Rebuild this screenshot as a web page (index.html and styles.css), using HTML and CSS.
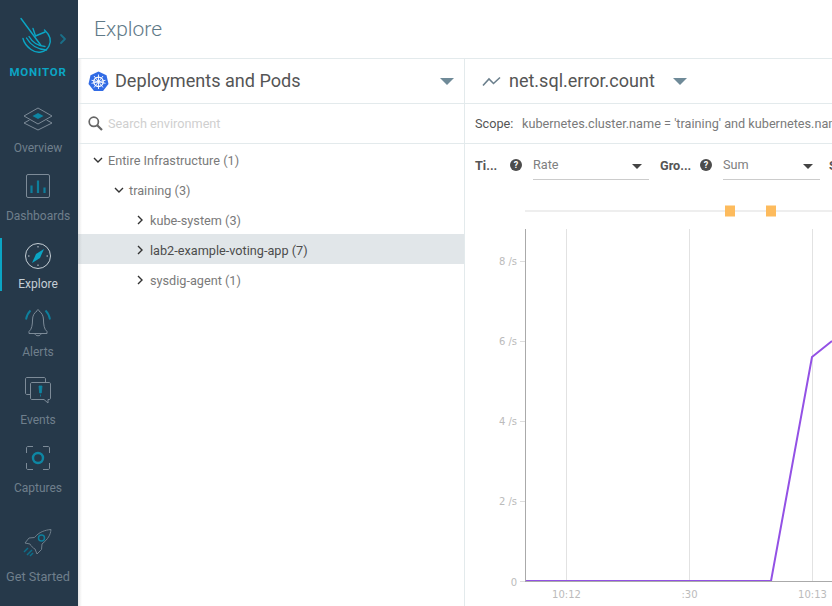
FILE: index.html
```html
<!DOCTYPE html>
<html lang="en">
<head>
    <meta charset="UTF-8">
    <meta name="viewport" content="width=device-width, initial-scale=1.0">
    <title>Explore</title>
    <link rel="stylesheet" href="styles.css">
</head>
<body>
    <nav class="sidebar">
        <div class="brand">
            <svg class="brand-logo" width="78" height="62" viewBox="0 0 78 62" fill="none" stroke="#0ba5c4" stroke-width="1.400" stroke-linecap="round" stroke-linejoin="round">
                <path d="M21 18.500 L41 45.500"/>
                <path d="M33 28.500 L35.500 36 L45 32"/>
                <path d="M44.500 30 C50 35 51.500 41 49 46 C45.500 53 37 54 31 49.500 C27 46.500 24 43 23 38.500"/>
                <path d="M26.500 38 C30 44 36 49.500 46.500 50"/>
                <path d="M29 36.500 C32 41.500 36.500 46 45 46.500"/>
                <path d="M61 35 L65 39 L61 43" stroke="#1a6f88" stroke-width="1.800"/>
            </svg>
            <div class="brand-name">MONITOR</div>
        </div>

        <a class="nav-item">
            <svg class="nav-icon" width="32" height="26" viewBox="0 0 32 26" fill="none" stroke="#7d8b98" stroke-width="1">
                <path d="M2 18 L16 25 L30 18 L24.500 15"/>
                <path d="M7.500 15 L2 18"/>
                <path d="M2 11 L16 3 L30 11 L16 19 Z" fill="#26394a"/>
                <path d="M10.500 11 L16 8 L21.500 11 L16 14 Z" fill="#0e86a3" stroke="none"/>
            </svg>
            <span>Overview</span>
        </a>
        <a class="nav-item">
            <svg class="nav-icon" width="26" height="26" viewBox="0 0 26 26" fill="none" stroke="#7d8b98" stroke-width="1">
                <rect x="1.500" y="1.500" width="23" height="23" rx="1.500"/>
                <path d="M6.500 20 V12.500 M13 20 V7.500 M19.500 20 V14.500" stroke="#0e7f9c" stroke-width="2.200"/>
            </svg>
            <span>Dashboards</span>
        </a>
        <a class="nav-item active">
            <svg class="nav-icon" width="28" height="28" viewBox="0 0 28 28" fill="none" stroke="#c5ced5" stroke-width="1">
                <circle cx="14" cy="14" r="12.500"/>
                <path d="M14 4 V5.500 M14 22.500 V24 M4 14 H5.500 M22.500 14 H24"/>
                <path d="M20 7 L16 16 L8 21 L12 12 Z" fill="#0ba5c4" stroke="none"/>
            </svg>
            <span>Explore</span>
        </a>
        <a class="nav-item">
            <svg class="nav-icon" width="28" height="29" viewBox="0 0 28 29" fill="none" stroke="#7d8b98" stroke-width="1">
                <path d="M5 24 C8 22 8.500 16 8.500 12.500 C8.500 8 10.500 5 13 3.500 C13.500 1.500 14.500 1.500 15 3.500 C17.500 5 19.500 8 19.500 12.500 C19.500 16 20 22 23 24 V26 H5 Z"/>
                <path d="M11 26 C11 29 17 29 17 26"/>
                <path d="M6.500 3 C4 5.500 2.500 8.500 2 12 M21.500 3 C24 5.500 25.500 8.500 26 12" stroke="#0e7f9c" stroke-width="1.800"/>
            </svg>
            <span>Alerts</span>
        </a>
        <a class="nav-item">
            <svg class="nav-icon" width="28" height="28" viewBox="0 0 28 28" fill="none" stroke="#7d8b98" stroke-width="1">
                <path d="M6 18.500 H3 C2 18.500 1.500 18 1.500 17 V3 C1.500 2 2 1.500 3 1.500 H20 C21 1.500 21.500 2 21.500 3 V6"/>
                <path d="M8 6.500 H25 C26 6.500 26.500 7 26.500 8 V22 C26.500 23 26 23.500 25 23.500 H24 V27 L20 23.500 H8 C7 23.500 6.500 23 6.500 22 V8 C6.500 7 7 6.500 8 6.500 Z"/>
                <path d="M15 10 H18 L17.300 17 H15.700 Z M16.500 18.500 V20.500" fill="#0e86a3" stroke="#0e86a3" stroke-width="0.800"/>
            </svg>
            <span>Events</span>
        </a>
        <a class="nav-item">
            <svg class="nav-icon" width="26" height="26" viewBox="0 0 26 26" fill="none" stroke="#7d8b98" stroke-width="1">
                <path d="M1.500 8 V3 C1.500 2 2 1.500 3 1.500 H8 M18 1.500 H23 C24 1.500 24.500 2 24.500 3 V8 M24.500 18 V23 C24.500 24 24 24.500 23 24.500 H18 M8 24.500 H3 C2 24.500 1.500 24 1.500 23 V18"/>
                <circle cx="13" cy="13" r="5" stroke="#0e86a3" stroke-width="2.400"/>
            </svg>
            <span>Captures</span>
        </a>
        <a class="nav-item start">
            <svg class="nav-icon" width="30" height="30" viewBox="0 0 30 30" fill="none" stroke="#6f7f8c" stroke-width="1">
                <path d="M28 1.500 C22 2 16 4 11.500 9.500 L6 10 L2 15 L7 16 C8 18 10 20 12 21 L14 26 L18.500 21.500 L19 16 C25 11 27.500 7 28 1.500 Z"/>
                <circle cx="18.500" cy="10" r="3" stroke="#0e7f9c" stroke-width="1.500"/>
                <path d="M1 24 L5 20 M4 27 L9 22 M7 28 L10 25" stroke="#0e6f8a" stroke-width="1.500"/>
            </svg>
            <span>Get Started</span>
        </a>
    </nav>

    <main class="content">
        <header class="page-header">Explore</header>

        <div class="panels">
            <section class="tree-panel">
                <div class="panel-title">
                    <svg class="k8s-icon" width="21" height="21" viewBox="0 0 21 21">
                        <path d="M10.500 0.500 L18.500 4.300 L20.500 13 L15 20 H6 L0.500 13 L2.500 4.300 Z" fill="#326ce5"/>
                        <g fill="none" stroke="#fff">
                            <circle cx="10.500" cy="10.800" r="4.700" stroke-width="1.300"/>
                            <path d="M10.500 3.500 V18 M3.500 9.300 L17.500 12.300 M17.500 9.300 L3.500 12.300 M6 5 L15 16.500 M15 5 L6 16.500" stroke-width="0.900"/>
                        </g>
                    </svg>
                    <span class="panel-name">Deployments and Pods</span>
                    <span class="caret big"></span>
                </div>
                <div class="search-row">
                    <svg width="17" height="17" viewBox="0 0 17 17" fill="none" stroke="#666" stroke-width="1.700">
                        <circle cx="6.800" cy="6.800" r="4.600"/>
                        <path d="M10.200 10.200 L15 15" stroke-width="2.200"/>
                    </svg>
                    <span class="search-hint">Search environment</span>
                </div>
                <ul class="tree">
                    <li class="tree-row depth-0"><svg class="chev" width="10" height="10" viewBox="0 0 10 10"><path d="M1 3 L5 7 L9 3"/></svg>Entire Infrastructure (1)</li>
                    <li class="tree-row depth-1"><svg class="chev" width="10" height="10" viewBox="0 0 10 10"><path d="M1 3 L5 7 L9 3"/></svg>training (3)</li>
                    <li class="tree-row depth-2"><svg class="chev" width="10" height="10" viewBox="0 0 10 10"><path d="M3 1 L7 5 L3 9"/></svg>kube-system (3)</li>
                    <li class="tree-row depth-2 selected"><svg class="chev" width="10" height="10" viewBox="0 0 10 10"><path d="M3 1 L7 5 L3 9"/></svg>lab2-example-voting-app (7)</li>
                    <li class="tree-row depth-2"><svg class="chev" width="10" height="10" viewBox="0 0 10 10"><path d="M3 1 L7 5 L3 9"/></svg>sysdig-agent (1)</li>
                </ul>
            </section>

            <section class="metric-panel">
                <div class="panel-title metric-title">
                    <svg width="19" height="12" viewBox="0 0 19 12" fill="none" stroke="#6b7f8c" stroke-width="1.600">
                        <path d="M1 10.500 L7 4 L11.500 8.500 L18 2.500"/>
                    </svg>
                    <span class="metric-name">net.sql.error.count</span>
                    <span class="caret big"></span>
                </div>
                <div class="scope-row">
                    <span class="scope-label">Scope:</span>
                    <span class="scope-value">kubernetes.cluster.name = 'training' and kubernetes.namespace.name = 'lab2-example-voting-app'</span>
                </div>
                <div class="controls">
                    <b class="control-label">Ti...</b>
                    <span class="help">?</span>
                    <div class="select rate"><span>Rate</span><i class="caret"></i></div>
                    <b class="control-label group">Gro...</b>
                    <span class="help">?</span>
                    <div class="select sum"><span>Sum</span><i class="caret"></i></div>
                    <b class="control-label">S</b>
                </div>
                <svg class="chart" width="367" height="424" viewBox="465 182 367 424">
                    <path d="M525 211 H832" stroke="#eee" stroke-width="2"/>
                    <rect x="725" y="205.500" width="10" height="11" fill="#fdbb5d"/>
                    <rect x="766" y="205.500" width="10" height="11" fill="#fdbb5d"/>

                    <path d="M566.500 229 V581 M689.500 229 V581 M812.500 229 V581" stroke="#e2e2e2"/>
                    <path d="M520 261.500 H525 M520 341.500 H525 M520 421.500 H525 M520 501.500 H525 M520 581.500 H525" stroke="#ddd"/>

                    <g class="y-labels" text-anchor="end">
                        <text x="517" y="265">8 /s</text>
                        <text x="517" y="345">6 /s</text>
                        <text x="517" y="425">4 /s</text>
                        <text x="517" y="505">2 /s</text>
                        <text x="517" y="586">0</text>
                    </g>
                    <g class="x-labels" text-anchor="middle">
                        <text x="566.500" y="598">10:12</text>
                        <text x="689.500" y="598">:30</text>
                        <text x="812.500" y="598">10:13</text>
                    </g>

                    <path d="M525 581 H771 L812 357 L832 341" fill="none" stroke="#9351e5" stroke-width="2"/>
                    <path d="M525.500 229 V581.500 H832" fill="none" stroke="#aaa"/>
                </svg>
            </section>
        </div>
    </main>
</body>
</html>
```

FILE: styles.css
```css
* {
    box-sizing: border-box;
}
body {
    margin: 0;
    width: 832px;
    height: 606px;
    overflow: hidden;
    display: flex;
    font-family: Roboto, sans-serif;
    background-color: #fff;
}

/* left nav */
.sidebar {
    width: 78px;
    height: 606px;
    flex-shrink: 0;
    padding-right: 2px;
    background-color: #26394a;
}
.brand {
    height: 100px;
    margin-right: -2px;
}
.brand-logo {
    display: block;
}
.brand-name {
    padding-right: 2px;
    text-align: center;
    font-size: 11.500px;
    line-height: 20px;
    font-weight: 700;
    letter-spacing: 0.8px;
    color: #0ba5c4;
}
.nav-item {
    position: relative;
    display: flex;
    flex-direction: column;
    align-items: center;
    height: 68px;
    font-size: 12px;
    color: #6f7f8c;
}
.nav-icon {
    height: 36px;
}
.nav-item span {
    line-height: 24px;
}
.nav-item.active {
    color: #c5ced5;
}
.nav-item.active .nav-icon {
    margin: 2px 0 -2px;
}
.nav-item.active::before {
    content: "";
    position: absolute;
    left: 0;
    top: 2px;
    width: 2px;
    height: 53px;
    background-color: #0ba5c4;
}
.nav-item.start {
    margin-top: 21px;
    font-size: 12.700px;
}
.nav-item.start .nav-icon {
    margin: -4px 0 4px;
}

/* main area */
.content {
    flex: 1;
    min-width: 0;
    display: flex;
    flex-direction: column;
}
.page-header {
    height: 59px;
    padding: 0 16px;
    line-height: 58px;
    font-size: 21px;
    font-weight: 300;
    color: #5f7a88;
    border-bottom: 1px solid #e3eaec;
}
.panels {
    flex: 1;
    display: flex;
    min-height: 0;
}
.tree-panel {
    width: 387px;
    flex-shrink: 0;
    border-right: 1px solid #e3eaec;
    background-image: linear-gradient(to right, #e6e6e6, #fff 4px);
}
.panel-title {
    height: 45px;
    display: flex;
    align-items: center;
    padding-left: 10px;
    border-bottom: 1px solid #e3eaec;
    color: #555;
}
.panel-name {
    font-size: 18.100px;
    margin: 0 0 2px 6px;
    width: 325px;
}
.caret {
    display: block;
    border-style: solid;
    border-width: 5px 5px 0;
    border-color: #444 transparent transparent;
}
.caret.big {
    border-width: 7px 7px 0;
    border-top-color: #6f8a98;
}
.search-row {
    height: 40px;
    display: flex;
    align-items: center;
    padding-left: 9px;
    border-bottom: 1px solid #e3eaec;
}
.search-hint {
    margin-left: 4px;
    font-size: 12.700px;
    color: #cfcfcf;
}
.tree {
    list-style: none;
    margin: 0;
    padding: 1px 0 0;
}
.tree-row {
    height: 30px;
    display: flex;
    align-items: center;
    font-size: 12.700px;
    color: #7a7a7a;
}
.tree-row.selected {
    margin: -1px 0 1px;
    padding-top: 2px;
    color: #4c4c4c;
    background-image: linear-gradient(to right, #cdd2d5, #e1e6e9 4px);
}
.chev {
    margin-right: 5px;
    fill: none;
    stroke: #333;
    stroke-width: 1.400;
}
.depth-0 {
    padding-left: 15px;
}
.depth-1 {
    padding-left: 36px;
}
.depth-2 {
    padding-left: 57px;
}

/* metric side */
.metric-panel {
    flex: 1;
    min-width: 0;
    overflow: hidden;
}
.metric-title {
    padding-left: 17px;
}
.metric-name {
    font-size: 18px;
    margin: 0 18px 2px 8px;
    white-space: nowrap;
}
.scope-row {
    height: 40px;
    display: flex;
    align-items: center;
    padding-left: 10px;
    border-bottom: 1px solid #e3eaec;
    font-size: 12.700px;
    white-space: nowrap;
}
.scope-label {
    color: #555;
    width: 47px;
    flex-shrink: 0;
}
.scope-value {
    color: #7a7a7a;
}
.controls {
    height: 38px;
    padding: 4px 0 0 10px;
    display: flex;
    align-items: center;
    font-size: 12.700px;
    white-space: nowrap;
}
.control-label {
    color: #555;
    width: 35px;
    flex-shrink: 0;
}
.control-label.group {
    margin-left: 11px;
    width: 40px;
}
.help {
    width: 12px;
    height: 12px;
    flex-shrink: 0;
    border-radius: 50%;
    background-color: #4c4c4c;
    color: #fff;
    font-size: 9px;
    font-weight: 700;
    line-height: 12px;
    text-align: center;
}
.select {
    flex-shrink: 0;
    height: 30px;
    margin-left: 11px;
    display: flex;
    align-items: center;
    justify-content: space-between;
    padding-right: 7px;
    border-bottom: 1px solid #ccc;
    color: #808080;
}
.select .caret {
    margin-top: 4px;
}
.select.rate {
    width: 116px;
}
.select.sum {
    width: 97px;
    margin-right: 9px;
}
.chart {
    display: block;
}
.chart text {
    font-family: "DejaVu Sans", sans-serif;
    font-size: 10px;
    fill: #bbb;
}
```
